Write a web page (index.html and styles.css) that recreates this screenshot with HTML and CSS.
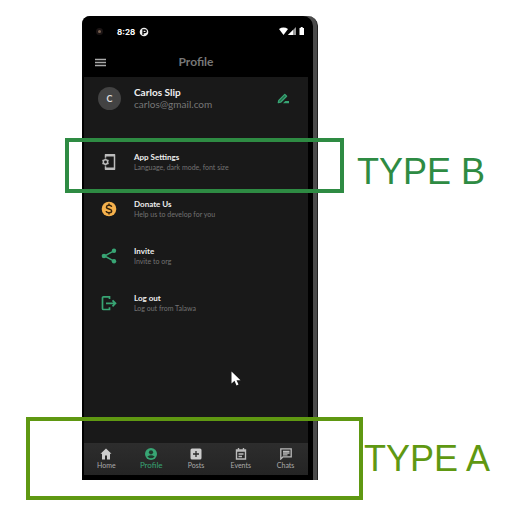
FILE: index.html
```html
<!DOCTYPE html>
<html lang="en">
<head>
<meta charset="utf-8">
<meta name="viewport" content="width=device-width, initial-scale=1">
<title>Profile</title>
<link rel="stylesheet" href="styles.css">
</head>
<body>
<main class="board">
  <div class="phone">
    <div class="screen">
      <div class="status">
        <span class="camera"></span>
        <span class="clock">8:28</span>
        <svg class="badge" viewBox="0 0 10 10"><circle cx="5" cy="5" r="4.300" fill="#eee"/><path d="M4 8V3h2a1.200 1.200 0 0 1 0 2.600H4" fill="none" stroke="#000" stroke-width="1.300"/></svg>
        <svg class="signals" viewBox="0 0 26 9"><path d="M0 2Q4.500-.8 9 2L4.500 8z" fill="#fff"/><path d="M17 0v8H9z" fill="#999"/><path d="M14 3v5H9z" fill="#fff"/><path d="M20.500 1h1.200V0h2v1H25v7h-4.500z" fill="#fff"/></svg>
      </div>
      <header class="appbar">
        <button class="icon-button" aria-label="Menu"><svg class="menu" viewBox="0 0 11 9"><path d="M0 1.500h11M0 4.500h11M0 7.500h11" stroke="#aaa" stroke-width="1.300"/></svg></button>
        <h1>Profile</h1>
      </header>
      <div class="content">
        <section class="account">
          <span class="avatar">C</span>
          <div class="who"><strong>Carlos Slip</strong><span>carlos@gmail.com</span></div>
          <button class="icon-button edit" aria-label="Edit profile"><svg class="pen" viewBox="0 0 12 11"><path d="M1.300 9.700l.5-2.300L7.800 1.400l1.800 1.800L3.600 9.200z" fill="#226b4a" stroke="#38a574" stroke-width="1.300" stroke-linejoin="round"/><path d="M6 10.300l2.300-2.300H12v2.300z" fill="#38a574"/></svg></button>
        </section>
        <nav class="options">
          <a href="#settings"><svg viewBox="0 0 16 18"><path d="M4.500 4.800V1.800h9v14.400h-9v-3" fill="none" stroke="#bbb" stroke-width="1.500" stroke-linejoin="round"/><path d="M4.500 2.300h9M4.500 15.700h9" stroke="#bbb" stroke-width="2.500"/><circle cx="4.500" cy="9" r="2.200" fill="none" stroke="#bbb" stroke-width="1.500"/><path d="M4.500 5.500v1.500M4.500 11v1.500M1.500 7.200l1.200.7M6.300 10.100l1.200.7M1.500 10.800l1.200-.7M6.300 7.900l1.200-.7" stroke="#bbb" stroke-width="1.500"/></svg><span class="label"><strong>App Settings</strong><span>Language, dark mode, font size</span></span></a>
          <a href="#donate"><svg viewBox="0 0 16 18"><circle cx="8" cy="9" r="7.300" fill="#f5b14c"/><path d="M10.700 6.800Q10.300 5.200 8 5.200T5.400 7q0 1.500 2.600 2t2.700 2q0 1.800-2.700 1.800T5.200 11M8 3.500v2M8 12.500v2" fill="none" stroke="#33220b" stroke-width="1.400"/></svg><span class="label"><strong>Donate Us</strong><span>Help us to develop for you</span></span></a>
          <a href="#invite"><svg viewBox="0 0 16 18"><path d="M13 3.800L3.500 9l9.500 5.200" fill="none" stroke="#38a574" stroke-width="1.500"/><g fill="#38a574"><circle cx="13" cy="3.800" r="2.200"/><circle cx="3" cy="9" r="2.300"/><circle cx="13" cy="14.200" r="2.200"/></g></svg><span class="label"><strong>Invite</strong><span>Invite to org</span></span></a>
          <a href="#logout"><svg viewBox="0 0 16 18"><path d="M8.500 5V2.800H2.500Q1.500 2.800 1.500 3.800v10.700q0 1 1 1h6v-2.200M5 9.300h9.500M11.500 6.300l3 3-3 3" fill="none" stroke="#38a574" stroke-width="1.700"/></svg><span class="label"><strong>Log out</strong><span>Log out from Talawa</span></span></a>
        </nav>
      </div>
      <nav class="tabs">
        <a href="#home"><svg viewBox="0 0 12 12"><path d="M6 .5L.5 5.800H2V11.500h3V7.500h2v4h3V5.800h1.500z" fill="#ccc"/></svg>Home</a>
        <a class="current" href="#profile"><svg viewBox="0 0 12 12"><circle cx="6" cy="6" r="6" fill="#38a574"/><circle cx="6" cy="4.300" r="2.100" fill="#20382c"/><path d="M2.300 8.500Q6 5.900 9.700 8.500 6 12.200 2.300 8.500" fill="#20382c"/></svg>Profile</a>
        <a href="#posts"><svg viewBox="0 0 12 12"><rect x=".5" y=".5" width="11" height="11" rx="1.500" fill="#ccc"/><path d="M6 3v6M3 6h6" stroke="#2a2a2a" stroke-width="1.300"/></svg>Posts</a>
        <a href="#events"><svg viewBox="0 0 12 12"><path d="M3.500 0v2M8.500 0v2M1.500 2h9v9h-9zM1 3h10M3.500 6h5M3.500 8.500h3.500" fill="none" stroke="#bbb" stroke-width="1.400"/></svg>Events</a>
        <a href="#chats"><svg viewBox="0 0 12 12"><path d="M.8 11V.8h10.400v8H3zM3 3.300h6.500M3 5h6.500M3 6.800h4.500" fill="none" stroke="#bbb" stroke-width="1.300"/></svg>Chats</a>
      </nav>
    </div>
    <svg class="pointer" viewBox="0 0 10 15"><path d="M.5.500v12l3-2.700 2 4.600 2-.9-2-4.300h4z" fill="#fff"/></svg>
    <div class="mark mark-b"><span>TYPE B</span></div>
    <div class="mark mark-a"><span>TYPE A</span></div>
  </div>
</main>
</body>
</html>
```
FILE: styles.css
```css
* { box-sizing: border-box; }
body { margin: 0; background: #fff; font-family: Lato, "Liberation Sans", sans-serif; }
h1 { margin: 0; }
a { color: inherit; text-decoration: none; }
svg { display: block; flex: none; }

.board {
  display: grid;
  grid-template-columns: 82px minmax(0, 1fr) 187px;
  padding: 16px 0 39px;
}
.phone {
  grid-column: 2;
  position: relative;
  padding: 0 4px 0 0;
  background: #4b4b4b;
  border-right: 1px solid #222;
  border-radius: 8px 10px 0 0;
}
.screen {
  padding: 0 5px 5px 2px;
  background: #000;
  border-radius: 8px 10px 0 0;
}
.status {
  display: flex;
  align-items: center;
  height: 31px;
  padding: 0 3px 0 12px;
  color: #fff;
}
.camera { width: 7px; height: 7px; border: 2px solid #1c1515; border-radius: 50%; background: #776050; }
.clock { margin-left: 14px; font: 700 8px Inter, sans-serif; }
.badge { width: 10px; height: 10px; margin-left: 4px; }
.signals { width: 26px; height: 9px; margin-left: auto; }

.appbar {
  display: grid;
  grid-template-columns: 1fr auto 1fr;
  align-items: center;
  height: 30px;
  padding: 0 11px;
}
.appbar h1 { color: #777; font-size: 12px; line-height: 16px; }
.icon-button { display: grid; place-items: center; justify-self: start; padding: 0; border: 0; background: none; }
.menu { width: 11px; height: 9px; }

.content { padding-bottom: 117px; background: #191919; }
.account { display: flex; align-items: center; height: 42px; padding: 0 19px 0 14px; }
.avatar {
  display: grid;
  place-items: center;
  width: 23px;
  height: 23px;
  border-radius: 50%;
  background: #434343;
  color: #ddd;
  font: 700 9px Lato, sans-serif;
}
.who { display: grid; margin-left: 13px; }
.who strong { color: #f0f0f0; font-size: 10px; line-height: 12px; }
.who span { color: #777; font-size: 10px; line-height: 12px; }
.edit { margin-left: auto; }
.pen { width: 12px; height: 11px; }

.options { margin-top: 19px; }
.options a { display: flex; align-items: center; height: 47px; padding-left: 17px; }
.options svg { width: 16px; height: 18px; }
.label { display: grid; margin-left: 17px; }
.label strong { color: #eee; font-size: 8px; line-height: 10px; }
.label span { color: #737373; font-size: 7px; line-height: 10px; }

.tabs {
  display: grid;
  grid-template-columns: repeat(5, 1fr);
  height: 32px;
  background: linear-gradient(#2d2d2d, #242424);
  color: #aaa;
  font-size: 7px;
  line-height: 9px;
}
.tabs a { display: flex; flex-direction: column; align-items: center; justify-content: center; gap: 1px; }
.tabs svg { width: 12px; height: 12px; }
.tabs .current { color: #38a574; font-size: 8px; }

.pointer { position: absolute; top: 355px; left: 149px; width: 10px; height: 15px; }
.mark { position: absolute; border: 4px solid; }
.mark span {
  position: absolute;
  left: 100%;
  font: 36px/36px "Liberation Sans", sans-serif;
  white-space: nowrap;
}
.mark-b { top: 122px; right: -27px; left: -17px; height: 55px; color: #2e8b43; }
.mark-b span { top: 12px; margin-left: 17px; }
.mark-a { top: 401px; right: -46px; left: -56px; height: 83px; color: #5f9812; }
.mark-a span { top: 20px; margin-left: 5px; }
```
